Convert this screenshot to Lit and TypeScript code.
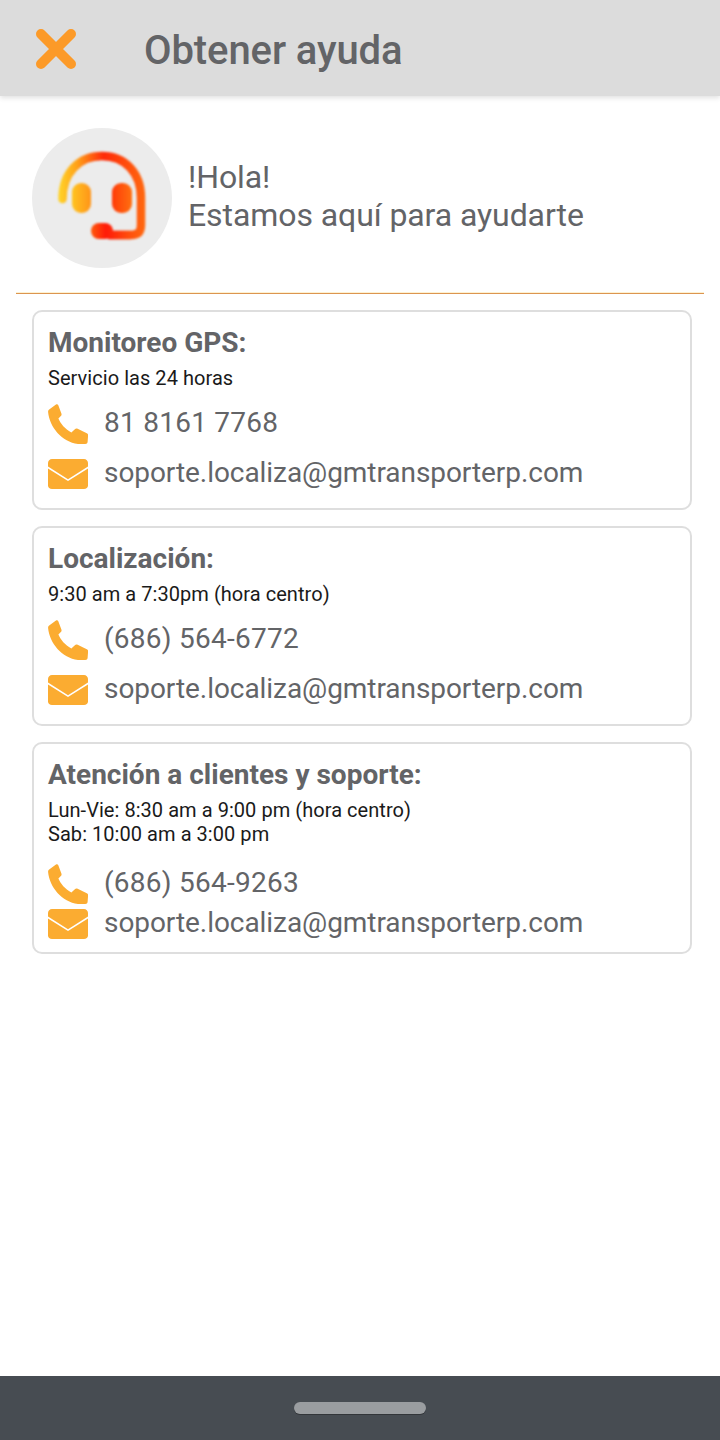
import { LitElement, html, css, svg } from "lit";
import { customElement } from "lit/decorators.js";

const phoneIcon = svg`<path d="M1.5 5.2 L8 0.6 C9 0 9.8 .3 10.3 1.2 L13.4 9.6 C13.8 10.8 13.5 11.6 12.6 12.3 L10.4 14.6 C12.8 20 16.8 25 23.4 28.4 L26.6 25.4 C27.6 24.5 28.6 24.3 29.6 24.8 L38.8 29.2 C39.8 29.7 40.2 30.4 40.1 31.5 L39.6 38 C39.5 39.3 38.7 40 37.2 40 L30 40 C14 38 1.4 23 0.1 8 C0 6.8 .5 5.9 1.5 5.2 Z" fill="#fbac31"/>`;

const mailIcon = svg`<path d="M4 0 H36 C38.2 0 40 1.8 40 4 V7.6 L20 20.2 L0 7.6 V4 C0 1.8 1.8 0 4 0 Z M0 9.4 L20 22 L40 9.4 V26.5 C40 28.7 38.2 30 36 30 H4 C1.8 30 0 28.7 0 26.5 Z" fill="#fbac31"/>`;

interface Contact {
  title: string;
  hours: string[];
  phone: string;
  tight?: boolean;
}

const contacts: Contact[] = [
  { title: "Monitoreo GPS:", hours: ["Servicio las 24 horas"], phone: "81 8161 7768" },
  { title: "Localización:", hours: ["9:30 am a 7:30pm (hora centro)"], phone: "(686) 564-6772" },
  {
    title: "Atención a clientes y soporte:",
    hours: ["Lun-Vie: 8:30 am a 9:00 pm (hora centro)", "Sab: 10:00 am a 3:00 pm"],
    phone: "(686) 564-9263",
    tight: true,
  },
];

@customElement("app-root")
export class AppRoot extends LitElement {
  static styles = css`
    :host {
      display: flex;
      flex-direction: column;
      min-height: 1440px;
      background: #fff;
      font-family: Roboto, "Noto Sans", sans-serif;
      color: #636467;
    }

    .top-bar {
      display: flex;
      align-items: center;
      height: 96px;
      padding-left: 36px;
      gap: 68px;
      background: #dcdcdc;
      box-shadow: 0 2px 5px rgba(0, 0, 0, 0.12);
    }

    .close {
      display: block;
      width: 40px;
      height: 40px;
      margin-top: 1px;
    }

    .top-title {
      font-size: 40px;
      font-weight: 500;
      line-height: 44px;
      margin-top: 6px;
      letter-spacing: -0.1px;
      white-space: nowrap;
    }

    .hello {
      display: flex;
      align-items: center;
      gap: 16px;
      margin: 0 16px;
      padding: 32px 16px 25px;
      border-bottom: 1px solid #dc9550;
      box-shadow: inset 0 -1px 0 #fdf2d2;
    }

    .avatar {
      width: 140px;
      height: 140px;
      border-radius: 50%;
      background: #ececec;
      flex: none;
      overflow: hidden;
    }

    .avatar svg {
      display: block;
      filter: blur(0.8px);
    }

    .hello-text {
      font-size: 32px;
      line-height: 38px;
      margin-top: -4px;
      letter-spacing: -0.08px;
    }

    .cards {
      flex: 1;
      display: flex;
      flex-direction: column;
      gap: 16px;
      padding: 16px 28px 0 32px;
    }

    .card {
      border: 2px solid #dedede;
      border-radius: 10px;
      padding: 14px 14px 0;
      height: 200px;
      box-sizing: border-box;
    }

    .card.tight {
      height: 212px;
    }

    .card-title {
      font-size: 28px;
      font-weight: 700;
      line-height: 34px;
    }

    .hours {
      margin-top: 6px;
      font-size: 20px;
      line-height: 24px;
      color: #1a1a1a;
      letter-spacing: 0.05px;
    }

    .row {
      display: flex;
      align-items: center;
      gap: 16px;
      height: 40px;
      font-size: 28px;
      margin-top: 10px;
    }

    .row.phone {
      margin-top: 14px;
    }

    .row span {
      margin-bottom: 4px;
      letter-spacing: -0.06px;
    }

    .row.phone span {
      letter-spacing: 0.25px;
    }

    .tight .row {
      margin-top: 0;
    }

    .tight .row.phone {
      margin-top: 18px;
    }

    .row svg {
      display: block;
      flex: none;
    }

    .bottom-bar {
      display: flex;
      align-items: center;
      justify-content: center;
      height: 64px;
      background: #474c52;
    }

    .pill {
      width: 132px;
      height: 12px;
      border-radius: 6px;
      background: #9a9da0;
      box-shadow: 0 1px 0 #33363a;
    }
  `;

  renderCard(c: Contact) {
    return html`
      <div class="card ${c.tight ? "tight" : ""}">
        <div class="card-title">${c.title}</div>
        <div class="hours">${c.hours.map((h) => html`<div>${h}</div>`)}</div>
        <div class="row phone">
          <svg width="40" height="40" viewBox="0 0 40 40">${phoneIcon}</svg>
          <span>${c.phone}</span>
        </div>
        <div class="row">
          <svg width="40" height="30" viewBox="0 0 40 30">${mailIcon}</svg>
          <span>soporte.localiza@gmtransporterp.com</span>
        </div>
      </div>
    `;
  }

  render() {
    return html`
      <div class="top-bar">
        <svg class="close" viewBox="0 0 40 40">
          <path d="M5 5 L35 35 M35 5 L5 35" stroke="#fc9a28" stroke-width="10" stroke-linecap="round" fill="none" />
        </svg>
        <div class="top-title">Obtener ayuda</div>
      </div>

      <div class="hello">
        <div class="avatar">
          <svg width="140" height="140" viewBox="0 0 140 140">
            <defs>
              <linearGradient id="hs" x1="26" y1="0" x2="114" y2="0" gradientUnits="userSpaceOnUse">
                <stop offset="0" stop-color="#ffd62a" />
                <stop offset="0.22" stop-color="#ffa018" />
                <stop offset="0.52" stop-color="#ff2a08" />
                <stop offset="1" stop-color="#ff6a10" />
              </linearGradient>
              <linearGradient id="ear" x1="0" y1="0" x2="1" y2="0">
                <stop offset="0" stop-color="#ffc420" />
                <stop offset="1" stop-color="#ff9418" />
              </linearGradient>
              <linearGradient id="ear2" x1="0" y1="0" x2="1" y2="0">
                <stop offset="0" stop-color="#ff3a08" />
                <stop offset="1" stop-color="#ff7010" />
              </linearGradient>
              <linearGradient id="mic" x1="59" y1="0" x2="112" y2="0" gradientUnits="userSpaceOnUse">
                <stop offset="0" stop-color="#ff5a0c" />
                <stop offset="0.28" stop-color="#ff1a08" />
                <stop offset="1" stop-color="#ff7010" />
              </linearGradient>
            </defs>
            <path d="M30.5 71 C30.5 45 47 28 70 28 C93 28 109 45 109 70 V97 C109 104 106 107 99 107 H78" fill="none" stroke="url(#hs)" stroke-width="8.5" stroke-linecap="round" />
            <rect x="40" y="55" width="19" height="30" rx="9" fill="url(#ear)" />
            <rect x="80" y="55" width="20" height="30" rx="9" fill="url(#ear2)" />
            <rect x="59" y="95" width="22" height="16" rx="8" fill="url(#mic)" />
            <path d="M76 107 H99" stroke="url(#mic)" stroke-width="8.5" fill="none" />
          </svg>
        </div>
        <div class="hello-text">!Hola!<br />Estamos aquí para ayudarte</div>
      </div>

      <div class="cards">${contacts.map((c) => this.renderCard(c))}</div>

      <div class="bottom-bar"><div class="pill"></div></div>
    `;
  }
}
